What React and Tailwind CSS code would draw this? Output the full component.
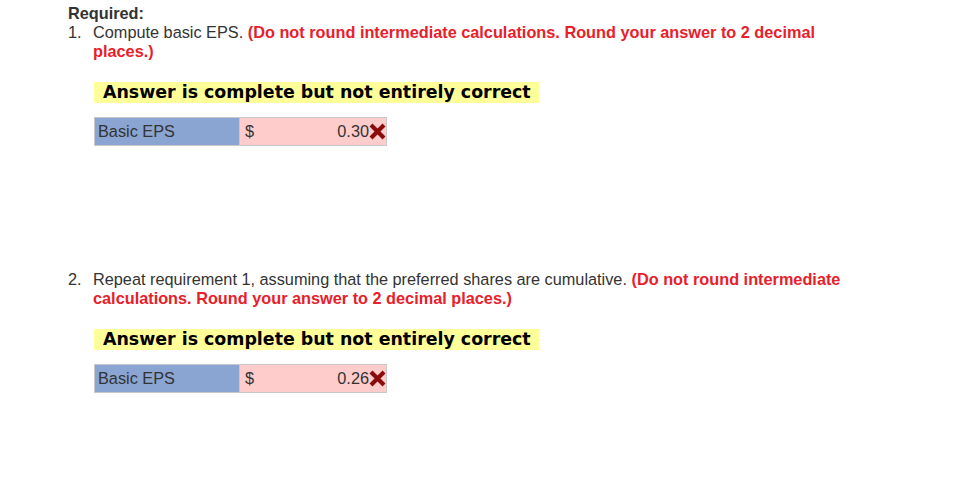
function Cross() {
  return (
    <svg width="17" height="17" viewBox="0 0 17 17" className="shrink-0">
      <path d="M2 2 L15 15 M15 2 L2 15" stroke="#8b0a0a" strokeWidth="4.2" strokeLinecap="butt" />
    </svg>
  );
}

function Answer({ value }) {
  return (
    <div className="pl-px">
      <div className="inline-block bg-[#ffff99] h-[21px] pl-[9px] pr-[8px] font-['DejaVu_Sans',sans-serif] font-bold text-[17.4px] leading-[21px] text-black">
        Answer is complete but not entirely correct
      </div>
      <div className="mt-[14px] flex w-[293px] h-[29px] border border-[#c8c8c8] text-[16.3px] text-[#333]">
        <div className="w-[145px] bg-[#8aa5d1] border-r border-[#c8c8c8] pl-[3px] flex items-center">Basic EPS</div>
        <div className="flex-1 bg-[#ffcccc] flex items-center pl-[5px]">
          <span>$</span>
          <span className="ml-auto">{value}</span>
          <Cross />
        </div>
      </div>
    </div>
  );
}

export default function App() {
  return (
    <div className="w-[957px] h-[481px] bg-white pl-[68px] pt-[4px] font-['Liberation_Sans',Arial,sans-serif] text-[16.3px] leading-[19px] text-[#333]">
      <div className="font-bold">Required:</div>
      <div className="flex">
        <span className="w-[25px]">1.</span>
        <div className="w-[760px]">
          Compute basic EPS.{" "}
          <span className="font-bold text-[#e8202a]">(Do not round intermediate calculations. Round your answer to 2 decimal places.)</span>
        </div>
      </div>
      <div className="pl-[25px] mt-[21px]">
        <Answer value="0.30" />
      </div>
      <div className="flex mt-[124px]">
        <span className="w-[25px]">2.</span>
        <div className="w-[760px]">
          Repeat requirement 1, assuming that the preferred shares are cumulative.{" "}
          <span className="font-bold text-[#e8202a]">(Do not round intermediate calculations. Round your answer to 2 decimal places.)</span>
        </div>
      </div>
      <div className="pl-[25px] mt-[21px]">
        <Answer value="0.26" />
      </div>
    </div>
  );
}
